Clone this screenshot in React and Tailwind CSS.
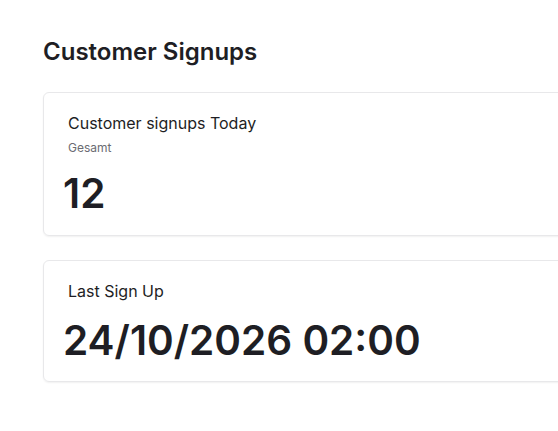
export default function App() {
  return (
    <div
      className="min-h-screen bg-white overflow-hidden text-[#1e1e24]"
      style={{ fontFamily: "Inter, 'Noto Sans', sans-serif" }}
    >
      <div className="pl-[43px] pt-[36px] w-[720px]">
        <h1 className="text-[24px] leading-[32px] font-semibold">Customer Signups</h1>

        <div className="mt-[24px] flex flex-col gap-6">
          <div className="rounded-md border border-[#e8e8ea] shadow-[0_1px_2px_rgba(0,0,0,0.06)] px-[24px] pt-[18px] pb-[20px]">
            <p className="text-[16px] leading-[24px]">Customer signups Today</p>
            <p className="text-[12px] leading-[16px] text-[#6b6b72] mt-[5px]">Gesamt</p>
            <p className="text-[40.5px] leading-[42px] font-semibold mt-[17px] -ml-[5px]">12</p>
          </div>

          <div className="rounded-md border border-[#e8e8ea] shadow-[0_1px_2px_rgba(0,0,0,0.06)] px-[24px] pt-[18px] pb-[19px]">
            <p className="text-[16px] leading-[24px]">Last Sign Up</p>
            <p className="text-[40.5px] leading-[42px] font-semibold mt-[17px] -ml-[5px]">24/10/2026 02:00</p>
          </div>
        </div>
      </div>
    </div>
  );
}
